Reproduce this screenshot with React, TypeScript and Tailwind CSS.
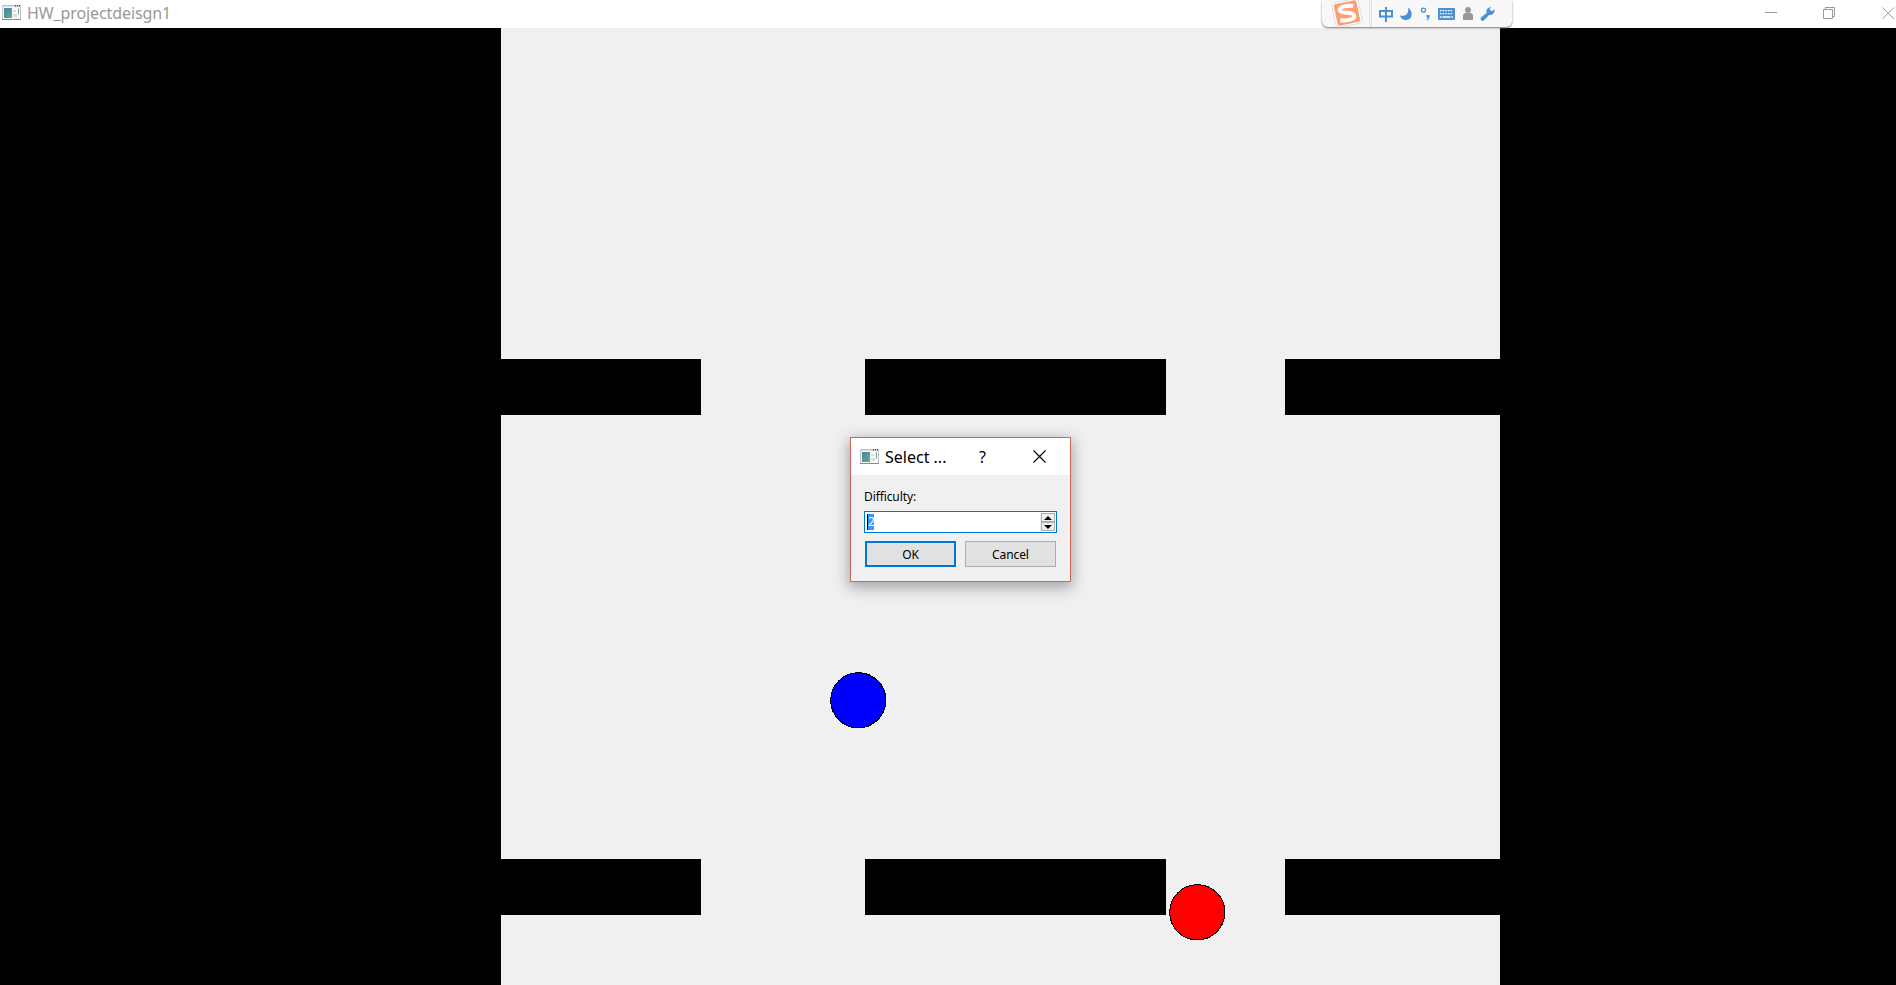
import type { ReactNode } from 'react';

function AppIcon() {
  return (
    <svg width="19" height="16" viewBox="0 0 19 16" className="shrink-0">
      <defs>
        <linearGradient id="pane" x1="0" y1="0" x2="1" y2="1">
          <stop offset="0" stopColor="#4a7fa8" />
          <stop offset="1" stopColor="#5bb585" />
        </linearGradient>
      </defs>
      <rect x="0.5" y="0.5" width="18" height="14" fill="#f8f8f8" stroke="#c4c4c8" />
      <path d="M0 14.5h19" stroke="#8c8c90" />
      <path d="M1 1.5h17" stroke="#dcdce4" />
      <path d="M13 0.8h1M15 0.8h1M17 0.8h1" stroke="#4a4a60" strokeWidth="1.4" />
      <rect x="2" y="3" width="8" height="10" fill="url(#pane)" />
      <path d="M11 5h3v2h-3zM11 9h4v3h-4z" fill="#dedee2" />
      <path d="M16.5 3.500v6" stroke="#69a890" />
    </svg>
  );
}

function Cross({ color }: { color: string }) {
  return (
    <svg width="13" height="13" viewBox="0 0 13 13" className="shrink-0">
      <path d="M0.5 0.5l12 12M12.5 0.5l-12 12" stroke={color} strokeWidth="1.1" />
    </svg>
  );
}

function InputToolbar() {
  return (
    <div className="absolute left-[1322px] top-0 z-10 flex h-[27px] w-[190px] rounded-b-[6px] bg-[#f8f8f8] shadow-[0_1px_2px_#777]">
      <svg width="190" height="27" viewBox="1 0 190 27">
        <path d="M48.5 0v27M50.5 0v27" stroke="#f6d5d5" />
        <g transform="rotate(-12 26 13)">
          <rect x="12.500" y="0.500" width="27" height="25" rx="4" fill="#fff" stroke="#ddd" />
          <rect x="14.500" y="2" width="23" height="22" rx="2" fill="#fb9f73" />
          <path d="M33.500 7.500C29 5.500 19.500 5 19.500 9s13 3.500 13 8S22 20.500 18 18.500" fill="none" stroke="#fff" strokeWidth="4" />
        </g>
        <g fill="none" stroke="#4a90d2" strokeWidth="2">
          <path d="M59 11h12v5.500H59zM65 7v15" />
          <circle cx="102.500" cy="10.200" r="2" strokeWidth="1.300" />
        </g>
        <g fill="#4a90d2">
          <path d="M87 7.500c5.500 3.500 5 12.500-2 12.500-3.500 0-5.500-2-6-4.500 5.500 1.500 9.500-2 8-8z" />
          <path d="M105.500 15h3c.5 2.500-.5 4.500-2.500 5.500l-.5-1c1-.5 1.300-1 1-2h-1z" />
          <rect x="117" y="8" width="17" height="12" rx="1" />
          <path d="M170 7c-3.200.3-5.300 3-4.300 6l-5.500 4.300a2 2 0 0 0 2.800 2.900l5-5.200c3 .5 6-2 5.500-5.500l-3 1.800-2-2z" />
        </g>
        <path d="M119 10.700h13M119 13.700h13" stroke="#fff" strokeWidth="1.300" strokeDasharray="1.600 1" />
        <path d="M119 17h1.500M121.500 17h8M130.500 17h1.500" stroke="#fff" strokeWidth="1.300" />
        <g fill="#999">
          <circle cx="147" cy="10" r="3" />
          <path d="M142 20v-4q0-3 3-3h4q3 0 3 3v4z" />
        </g>
      </svg>
    </div>
  );
}

function TitleBar() {
  return (
    <header className="flex h-7 shrink-0 items-center bg-white pl-[2px]">
      <div className="flex h-full items-center pb-[2px]"><AppIcon /></div>
      <h1 className="ml-[6px] flex-1 pb-[2px] text-[16px] leading-none tracking-[-0.1px] text-[#999] [font-family:'Noto_Sans','Noto_Sans_CJK_SC',sans-serif]">HW_projectdeisgn1</h1>
      <svg width="131" height="28" viewBox="0 0 131 28" className="shrink-0" fill="none" stroke="#999">
        <path d="M0 12.500h12" />
        <path d="M58.500 9.500h9v9h-9zM60.500 9.500v-2h9v9h-2" />
        <path d="M117.500 7.500l11.500 11.500M129 7.500l-11.500 11.500" />
      </svg>
    </header>
  );
}

function WallRow() {
  return (
    <div className="flex h-14 shrink-0 justify-between">
      <div className="w-[200px] bg-black" />
      <div className="ml-[45px] w-[301px] bg-black" />
      <div className="w-[215px] bg-black" />
    </div>
  );
}

function Ball({ className, fill }: { className: string; fill: string }) {
  return (
    <svg width="57" height="57" viewBox="0 0 57 57" className={className} shapeRendering="crispEdges">
      <circle cx="28.300" cy="28.300" r="27.600" fill={fill} stroke="#000" />
    </svg>
  );
}

function DialogButton({ children, className }: { children: ReactNode; className: string }) {
  return (
    <button className={`flex h-[26px] w-[91px] items-center justify-center bg-[#e1e1e1] pt-px leading-none tracking-[-0.1px] ${className}`}>{children}</button>
  );
}

function Dialog() {
  return (
    <div className="absolute left-[850px] top-[437px] flex h-[145px] w-[221px] flex-col border border-[#d0655c] bg-[#f0f0f0] text-black shadow-[0_4px_14px_1px_rgba(0,0,0,0.34)]">
      <div className="flex h-[37px] shrink-0 items-center bg-white pl-[9px]">
        <AppIcon />
        <span className="ml-[6px] w-[94px] text-[16px] leading-none [font-family:'Noto_Sans',sans-serif]">Select ...</span>
        <span className="w-[54px] text-[16px] leading-none [font-family:'Noto_Sans',sans-serif]">?</span>
        <Cross color="#000" />
      </div>
      <div className="flex flex-col pl-[13px] pt-[14px] text-[12px] [font-family:'Noto_Sans',sans-serif]">
        <label className="h-[22px] leading-[16px] tracking-[-0.1px]">Difficulty:</label>
        <div className="flex h-[22px] w-[193px] justify-between border border-[#0078d7] bg-white p-[1px]">
          <span className="ml-[1px] mt-[1px] h-4 w-[7px] border-l border-black bg-[#3399ff] text-[12px] leading-4 text-white">2</span>
          <div className="flex w-[15px] flex-col border-l border-[#f0f0f0]">
            <div className="flex h-[9px] items-center justify-center border border-[#adadad] bg-[#f0f0f0]">
              <svg width="8" height="4" viewBox="0 0 8 4"><path d="M0 4h8L4 0z" /></svg>
            </div>
            <div className="flex h-[9px] items-center justify-center border border-[#adadad] bg-[#f0f0f0]">
              <svg width="8" height="4" viewBox="0 0 8 4"><path d="M0 0h8L4 4z" /></svg>
            </div>
          </div>
        </div>
        <div className="ml-[1px] mt-2 flex gap-[9px]">
          <DialogButton className="border-2 border-[#0078d7]">OK</DialogButton>
          <DialogButton className="border border-[#adadad]">Cancel</DialogButton>
        </div>
      </div>
    </div>
  );
}

export default function App() {
  return (
    <div className="relative flex h-[985px] w-[1896px] flex-col overflow-hidden bg-black">
      <TitleBar />
      <main className="ml-[501px] flex w-[999px] flex-1 flex-col bg-[#f0f0f0]">
        <div className="h-[331px] shrink-0" />
        <WallRow />
        <div className="h-[444px] shrink-0" />
        <WallRow />
      </main>
      <Ball className="absolute left-[830px] top-[672px]" fill="#0000ff" />
      <Ball className="absolute left-[1169px] top-[884px]" fill="#ff0000" />
      <InputToolbar />
      <Dialog />
    </div>
  );
}
